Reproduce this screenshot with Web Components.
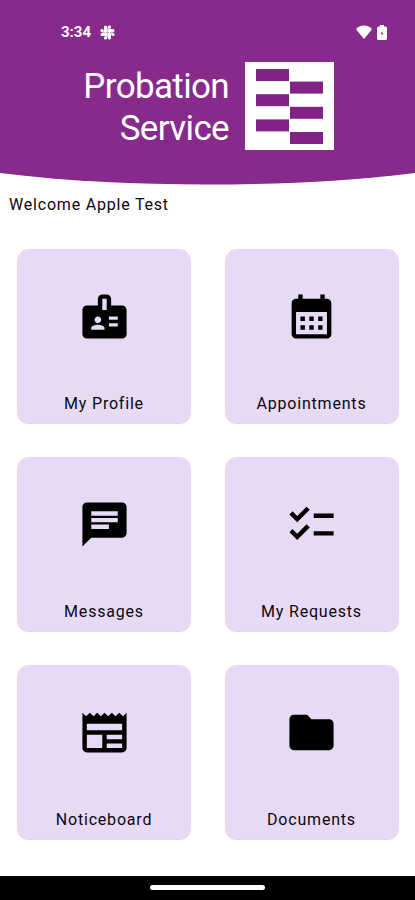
<!DOCTYPE html>
<html lang="en">
<head>
<meta charset="utf-8">
<meta name="viewport" content="width=device-width, initial-scale=1">
<title>Probation Service</title>
<style>
    body {
        margin: 0;
        background: #fff;
        font-family: Roboto, "Liberation Sans", sans-serif;
        color: #0c0812;
    }
</style>
</head>
<body>
<probation-app></probation-app>

<script>
const ICONS = {
    badge: 'M20 7h-5V4c0-1.1-.9-2-2-2h-2c-1.1 0-2 .9-2 2v3H4c-1.1 0-2 .9-2 2v11c0 1.1.9 2 2 2h16c1.1 0 2-.9 2-2V9c0-1.1-.9-2-2-2zM9 12c.83 0 1.5.67 1.5 1.5S9.83 15 9 15s-1.5-.67-1.5-1.5S8.17 12 9 12zm3 6H6v-.75c0-1 2-1.5 3-1.5s3 .5 3 1.5V18zm1-9h-2V4h2v5zm5 7.5h-4V15h4v1.5zm0-3h-4V12h4v1.5z',
    calendar: 'M19 4h-1V2h-2v2H8V2H6v2H5c-1.11 0-1.99.9-1.99 2L3 20a2 2 0 0 0 2 2h14c1.1 0 2-.9 2-2V6c0-1.1-.9-2-2-2zm0 16H5V10h14v10zM9 14H7v-2h2v2zm4 0h-2v-2h2v2zm4 0h-2v-2h2v2zm-8 4H7v-2h2v2zm4 0h-2v-2h2v2zm4 0h-2v-2h2v2z',
    chat: 'M20 2H4c-1.1 0-1.99.9-1.99 2L2 22l4-4h14c1.1 0 2-.9 2-2V4c0-1.1-.9-2-2-2zM6 9h12v2H6V9zm8 5H6v-2h8v2zm4-6H6V6h12v2z',
    checklist: 'M22 7h-9v2h9V7zm0 8h-9v2h9v-2zM5.54 11L2 7.46l1.41-1.41 2.12 2.12 4.24-4.24 1.41 1.41L5.54 11zm0 8L2 15.46l1.41-1.41 2.12 2.12 4.24-4.24 1.41 1.41L5.54 19z',
    news: 'M22 3l-1.67 1.67L18.67 3 17 4.67 15.33 3l-1.66 1.67L12 3l-1.67 1.67L8.67 3 7 4.67 5.33 3 3.67 4.67 2 3v16c0 1.1.9 2 2 2h16c1.1 0 2-.9 2-2V3zM11 19H4v-6h7v6zm9 0h-7v-2h7v2zm0-4h-7v-2h7v2zm0-4H4V8h16v3z',
    folder: 'M10 4H4c-1.1 0-1.99.9-1.99 2L2 18c0 1.1.9 2 2 2h16c1.1 0 2-.9 2-2V8c0-1.1-.9-2-2-2h-8l-2-2z'
};

class StatusBar extends HTMLElement {
    constructor() {
        super();
        this.attachShadow({ mode: 'open' });
    }

    connectedCallback() {
        this.shadowRoot.innerHTML = `
            <style>
                :host {
                    display: flex;
                    align-items: center;
                    box-sizing: border-box;
                    height: 20px;
                    padding: 0 28px 0 61px;
                    color: #fff;
                    font-size: 15px;
                    font-weight: 700;
                    line-height: 20px;
                }
                svg { display: block; fill: currentColor; }
                .app { margin-left: 9px; }
                .right { display: flex; align-items: center; gap: 5px; margin-left: auto; }
            </style>
            <span>${this.getAttribute('time')}</span>
            <svg class="app" width="15" height="15" viewBox="0 0 15 15">
                <rect x="4" y="0.5" width="3" height="7" rx="1.5"/>
                <rect x="7.5" y="4" width="7" height="3" rx="1.5"/>
                <rect x="8" y="7.5" width="3" height="7" rx="1.5"/>
                <rect x="0.5" y="8" width="7" height="3" rx="1.5"/>
                <rect x="0.5" y="4" width="3" height="3" rx="1.3"/>
                <rect x="8" y="0.5" width="3" height="3" rx="1.3"/>
                <rect x="11.5" y="8" width="3" height="3" rx="1.3"/>
                <rect x="4" y="11.5" width="3" height="3" rx="1.3"/>
                <path d="M2 5h11v5H2zM5 2h5v11H5z" opacity=".6"/>
            </svg>
            <div class="right">
                <svg width="16" height="14" viewBox="0 0 16 14"><path d="M8 14L0 4.2C2 1.7 4.8.5 8 .5s6 1.2 8 3.7z"/></svg>
                <svg width="10" height="15" viewBox="0 0 10 15"><path fill-rule="evenodd" d="M3 0h4v1.5h1.5Q10 1.5 10 3v10.5Q10 15 8.5 15h-7Q0 15 0 13.5V3Q0 1.5 1.5 1.5H3zM5.2 6L3.5 8.5h1.2v2.2L6.5 8H5.200z"/></svg>
            </div>
        `;
    }
}

class ServiceLogo extends HTMLElement {
    constructor() {
        super();
        this.attachShadow({ mode: 'open' });
    }

    connectedCallback() {
        // Six bars, alternating left and right
        let bars = '';
        for (let i = 0; i < 6; i++) {
            bars += `<rect x="${i % 2 ? 45 : 11}" y="${(7 + i * 12.6).toFixed(1)}" width="33" height="12"/>`;
        }
        this.shadowRoot.innerHTML = `
            <style>
                :host { display: block; width: 89px; height: 88px; background: #fff; }
                svg { display: block; fill: #832286; }
            </style>
            <svg width="89" height="88" viewBox="0 0 89 88">${bars}</svg>
        `;
    }
}

class AppHeader extends HTMLElement {
    constructor() {
        super();
        this.attachShadow({ mode: 'open' });
    }

    connectedCallback() {
        this.shadowRoot.innerHTML = `
            <style>
                :host {
                    display: block;
                    box-sizing: border-box;
                    height: 185px;
                    padding-top: 22px;
                    background: #872a8b;
                    clip-path: path("M0 0H415V173C350 181 280 184.5 207.5 184.5S65 181 0 173Z");
                }
                .brand { display: flex; padding: 20px 81px 0 0; justify-content: flex-end; gap: 17px; }
                h1 {
                    margin: 4px -1px 0 0;
                    color: #fff;
                    font-size: 35px;
                    font-weight: 400;
                    line-height: 42px;
                    letter-spacing: -.65px;
                    text-align: right;
                }
            </style>
            <status-bar time="3:34"></status-bar>
            <div class="brand">
                <h1><slot></slot></h1>
                <service-logo></service-logo>
            </div>
        `;
    }
}

class MenuTile extends HTMLElement {
    constructor() {
        super();
        this.attachShadow({ mode: 'open' });
    }

    connectedCallback() {
        const icon = ICONS[this.getAttribute('icon')];
        this.shadowRoot.innerHTML = `
            <style>
                :host {
                    display: flex;
                    flex-direction: column;
                    align-items: center;
                    justify-content: space-between;
                    box-sizing: border-box;
                    height: 174px;
                    padding: 41px 0 9px;
                    border-radius: 12px;
                    background: #e6daf5;
                    box-shadow: 0 1px 1px rgba(60, 40, 70, .18);
                    font-size: 16px;
                    line-height: 20px;
                    letter-spacing: .8px;
                }
                :host(:nth-child(even)) { padding-right: 1px; }
                svg { display: block; fill: #000; }
            </style>
            <svg width="53" height="53" viewBox="0 0 24 24"><path d="${icon}"/></svg>
            <span><slot></slot></span>
        `;
    }
}

class NavPill extends HTMLElement {
    constructor() {
        super();
        this.attachShadow({ mode: 'open' });
        this.shadowRoot.innerHTML = `
            <style>
                :host { display: flex; justify-content: center; height: 24px; background: #000; }
                i { width: 115px; height: 5px; margin-top: 9px; border-radius: 3px; background: #fff; }
            </style>
            <i></i>
        `;
    }
}

class ProbationApp extends HTMLElement {
    constructor() {
        super();
        this.attachShadow({ mode: 'open' });
    }

    connectedCallback() {
        this.shadowRoot.innerHTML = `
            <style>
                :host { display: flex; flex-direction: column; width: 415px; height: 900px; overflow: hidden; }
                p { margin: 10px 0 0 9px; font-size: 16px; line-height: 20px; letter-spacing: .8px; }
                main {
                    display: grid;
                    grid-template-columns: 174px 174px;
                    gap: 34px;
                    padding: 34px 0 0 17px;
                }
                nav-pill { margin-top: auto; }
            </style>
            <app-header>Probation<br>Service</app-header>
            <p>Welcome Apple Test</p>
            <main>
                <menu-tile icon="badge">My Profile</menu-tile>
                <menu-tile icon="calendar">Appointments</menu-tile>
                <menu-tile icon="chat">Messages</menu-tile>
                <menu-tile icon="checklist">My Requests</menu-tile>
                <menu-tile icon="news">Noticeboard</menu-tile>
                <menu-tile icon="folder">Documents</menu-tile>
            </main>
            <nav-pill></nav-pill>
        `;
    }
}

customElements.define('status-bar', StatusBar);
customElements.define('service-logo', ServiceLogo);
customElements.define('app-header', AppHeader);
customElements.define('menu-tile', MenuTile);
customElements.define('nav-pill', NavPill);
customElements.define('probation-app', ProbationApp);
</script>
</body>
</html>
